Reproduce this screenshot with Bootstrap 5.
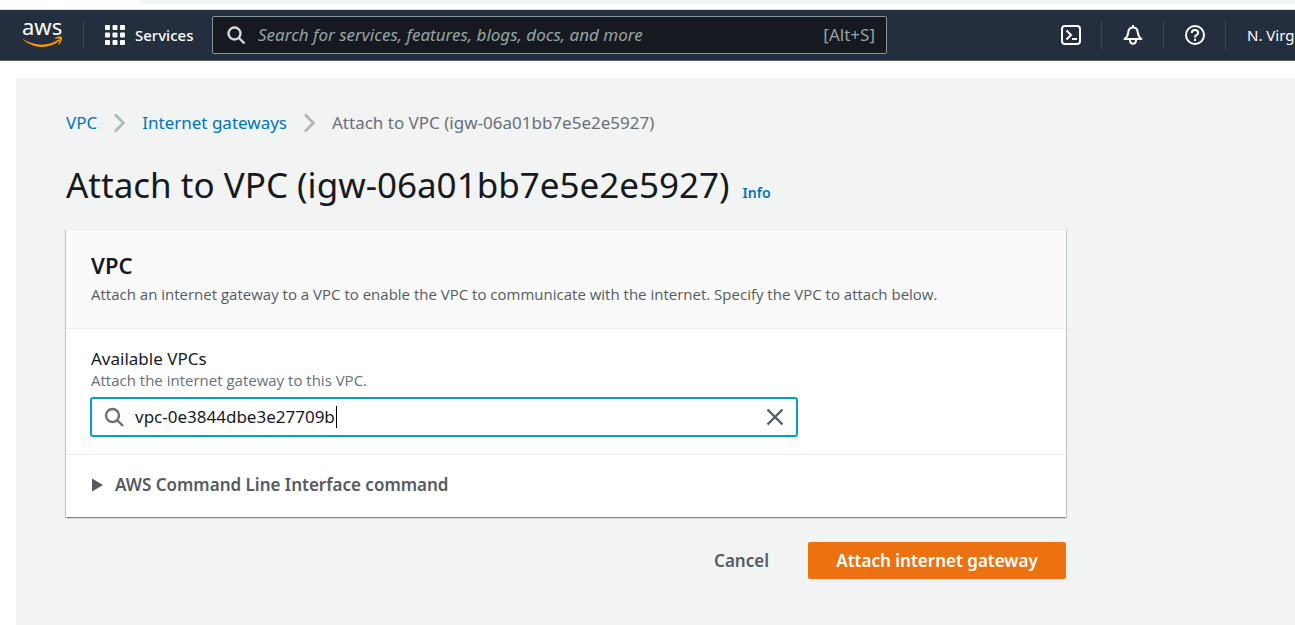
<!DOCTYPE html>
<html lang="en">
<head>
<meta charset="utf-8">
<meta name="viewport" content="width=device-width, initial-scale=1">
<title>Attach to VPC</title>
<link href="https://cdn.jsdelivr.net/npm/bootstrap@5.3.0/dist/css/bootstrap.min.css" rel="stylesheet">
<style>
body{font-family:"Noto Sans","Open Sans",sans-serif;font-size:17px;line-height:24px;color:#16191f;background:#fff}
a{color:#0073bb;text-decoration:none}
.tabstrip{height:10px;border-bottom:1px solid #d5d9de}
.tabstrip-bar{height:4px;margin-left:140px;background:#f1f3f4;border-bottom-left-radius:8px}
.console-nav{height:51px;background:#232f3e;border-bottom:1px solid #545b64;color:#fff;font-size:15px;overflow:hidden}
.nav-divider{width:1px;height:28px;background:#414750;flex:none}
.plain{background:none;border:0;padding:0;color:inherit}
.nav-cell{width:61px}
.nav-cell svg{display:block;margin:0 auto}
.services{width:128px;padding-left:21px;gap:10px;font-weight:500}
.logo-cell{width:83px;padding-left:22px}
.nav-search{width:675px;height:38px;background:#16191f;border:1px solid #879596;border-radius:2px;color:#95a5a6;font-size:17px;padding:0 11px 0 14px}
.nav-search input{background:none;border:0;outline:0;color:inherit;min-width:0;padding:0}
.nav-search input::placeholder{color:#95a5a6;font-style:italic;opacity:1}
.region{width:69px;padding-left:21px}
.page-body{background:#f2f3f3;margin:17px 0 0 16px;padding:33px 50px 46px}
.content{max-width:1000px}
.crumbs{gap:17px;color:#687078}
.page-title{gap:13px;margin:28px 0 22px}
h1{font-size:35px;line-height:44px;font-weight:400;margin:0}
.info{font-size:14px;font-weight:600}
.panel{background:#fff;border-top:1px solid #eaeded;box-shadow:0 1px 1px 0 rgba(0,28,36,.3),1px 1px 1px 0 rgba(0,28,36,.15),-1px 1px 1px 0 rgba(0,28,36,.15)}
.panel-head{background:#fafafa;border-bottom:1px solid #eaeded;padding:21px 25px 22px}
h2{font-size:22px;line-height:28px;font-weight:600;margin:0 0 3px}
.hint{font-family:"Open Sans","Noto Sans",sans-serif;font-size:15px;line-height:20px;color:#687078}
.panel-head .hint{color:#545b64;line-height:24px;margin:0}
.panel-form{padding:19px 24px 17px}
.panel-form label,.panel-form .hint{margin-left:1px}
.panel-form label{line-height:22px}
.vpc-box{max-width:708px;height:40px;border:2px solid #00a1c9;border-radius:3px;padding:0 12px;gap:11px;margin-top:7px;background:#fff}
.vpc-box input{border:0;outline:0;padding:0;color:#16191f;caret-color:transparent;width:100%}
.caret{position:absolute;left:201px;top:1px;width:1px;height:22px;background:#000}
.panel-foot{border-top:1px solid #eaeded;padding:18px 26px 20px;color:#545b64}
.panel-foot button{gap:12px}
.actions{margin-top:25px;gap:39px;color:#545b64}
.attach{background:#ec7211;color:#fff;border:0;border-radius:2px;width:258px;height:37px}
.panel-foot button,.actions button{font-weight:600}
</style>
</head>
<body class="d-flex flex-column min-vh-100">
<div class="tabstrip"><div class="tabstrip-bar"></div></div>
<nav class="console-nav d-flex align-items-center text-nowrap" aria-label="Console">
  <a href="#" class="logo-cell flex-shrink-0" aria-label="AWS home">
    <svg width="42" height="50" viewBox="0 -10 42 50" class="d-block">
      <text x="0" y="15" font-family="Noto Sans, sans-serif" font-size="22" fill="#fff">aws</text>
      <path d="M0 18.500C12 26 25 27 36.500 19.500C37.500 19 38.200 20.200 37.200 21C26 30 10 28.500 0 18.500Z" fill="#f90"/>
      <path d="M33 18C36 16 39.500 16.300 40 17.200C40.500 19 39.200 22.500 37 24.500C36.500 25 36 24.700 36.300 24C37.500 21 38.500 19 37.800 18.700C37 18.200 35 18.600 33.400 18.800C32.500 18.900 32.400 18.300 33 18Z" fill="#f90"/>
    </svg>
  </a>
  <span class="nav-divider"></span>
  <button class="plain services d-flex align-items-center flex-shrink-0" type="button">
    <svg width="20" height="20" fill="#fff"><g id="r"><rect width="5" height="5" rx="1"/><rect x="7.500" width="5" height="5" rx="1"/><rect x="15" width="5" height="5" rx="1"/></g><use href="#r" y="7.500"/><use href="#r" y="15"/></svg>
    Services
  </button>
  <div class="nav-search d-flex align-items-center">
    <svg width="19" height="19" viewBox="0 0 19 19" fill="none" stroke="#d5dbdb" stroke-width="2.400" class="flex-shrink-0"><circle cx="7.500" cy="7.500" r="6"/><path d="M12 12l5.500 5.500"/></svg>
    <input type="search" class="flex-grow-1 ms-2 ps-1" aria-label="Search" placeholder="Search for services, features, blogs, docs, and more">
    <span>[Alt+S]</span>
  </div>
  <div class="d-flex align-items-center ms-auto flex-shrink-0">
    <button class="plain nav-cell" type="button" aria-label="CloudShell"><svg width="20" height="20" fill="none" stroke="#fff" stroke-width="2"><rect x="1" y="1" width="18" height="18" rx="3"/><path d="M5.500 5.500l4.500 4.500-4.500 4.500M11 14h5"/></svg></button>
    <span class="nav-divider"></span>
    <button class="plain nav-cell" type="button" aria-label="Notifications"><svg width="20" height="20" fill="none" stroke="#fff" stroke-width="2" stroke-linejoin="round"><path d="M10 0v3M1.500 14C4.500 12 5 10 5.200 7.500C5.500 4 7.500 2.500 10 2.500S14.500 4 14.800 7.500C15 10 15.500 12 18.500 14Z"/><path d="M7 15c0 5 6 5 6 0"/></svg></button>
    <span class="nav-divider"></span>
    <button class="plain nav-cell" type="button" aria-label="Help"><svg width="20" height="20" fill="none" stroke="#fff" stroke-width="2"><circle cx="10" cy="10" r="9"/><path d="M6.800 8C6.800 3.800 13.200 4 13.200 7.700C13.200 10 10 9.800 10 12.500M10 13.800v2.200"/></svg></button>
    <span class="nav-divider"></span>
    <button class="plain region text-start" type="button">N. Virg</button>
  </div>
</nav>

<main class="page-body flex-grow-1">
  <div class="content">
    <nav class="crumbs d-flex align-items-center" aria-label="Breadcrumb">
      <a href="#">VPC</a>
      <svg width="11" height="20" fill="none" stroke="#aab7b8" stroke-width="2.500"><path d="M1 1.500l8.500 8.500L1 18.500"/></svg>
      <a href="#">Internet gateways</a>
      <svg width="11" height="20" fill="none" stroke="#aab7b8" stroke-width="2.500"><path d="M1 1.500l8.500 8.500L1 18.500"/></svg>
      <span>Attach to VPC (igw-06a01bb7e5e2e5927)</span>
    </nav>
    <div class="d-flex align-items-baseline page-title">
      <h1>Attach to VPC (igw-06a01bb7e5e2e5927)</h1>
      <a href="#" class="info">Info</a>
    </div>
    <section class="panel">
      <div class="panel-head">
        <h2>VPC</h2>
        <p class="hint">Attach an internet gateway to a VPC to enable the VPC to communicate with the internet. Specify the VPC to attach below.</p>
      </div>
      <div class="panel-form">
        <label for="vpc" class="d-block">Available VPCs</label>
        <div class="hint" id="vpc-hint">Attach the internet gateway to this VPC.</div>
        <div class="vpc-box d-flex align-items-center">
          <svg width="20" height="20" viewBox="0 0 20 20" fill="none" stroke="#687078" stroke-width="2.400" class="flex-shrink-0"><circle cx="8.500" cy="8.500" r="6.500"/><path d="M13 13l6 6"/></svg>
          <div class="position-relative d-flex flex-grow-1">
            <input id="vpc" type="text" value="vpc-0e3844dbe3e27709b" aria-describedby="vpc-hint">
            <span class="caret"></span>
          </div>
          <button class="plain" type="button" aria-label="Clear"><svg width="18" height="18" class="d-block" stroke="#545b64" stroke-width="2.400"><path d="M1.500 1.500l15 15M16.500 1.500l-15 15"/></svg></button>
        </div>
      </div>
      <div class="panel-foot">
        <button class="plain d-flex align-items-center" type="button" aria-expanded="false">
          <svg width="11" height="14" fill="#545b64"><path d="M0 .5L11 7L0 13.500Z"/></svg>
          AWS Command Line Interface command
        </button>
      </div>
    </section>
    <div class="actions d-flex justify-content-end align-items-center">
      <button class="plain" type="button">Cancel</button>
      <button class="attach" type="submit">Attach internet gateway</button>
    </div>
  </div>
</main>
<script src="https://cdn.jsdelivr.net/npm/bootstrap@5.3.0/dist/js/bootstrap.bundle.min.js"></script>
</body>
</html>
